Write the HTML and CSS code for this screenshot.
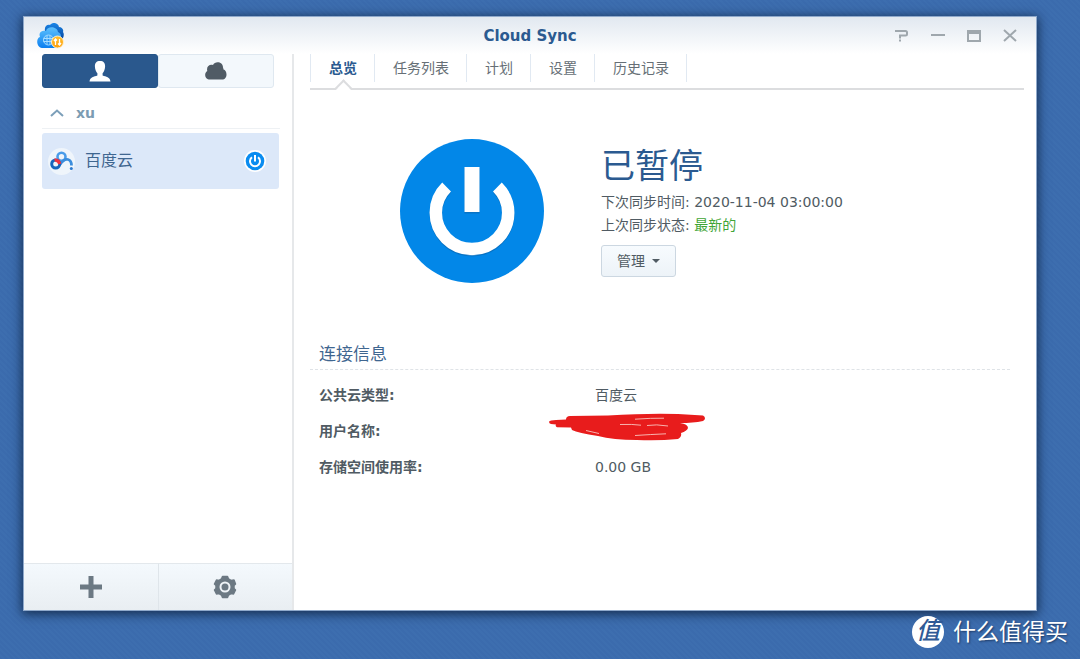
FILE: index.html
```html
<!DOCTYPE html>
<html lang="zh-CN">
<head>
<meta charset="utf-8">
<title>Cloud Sync</title>
<link rel="stylesheet" href="styles.css">
</head>
<body class="desktop">
<div class="window">
  <header class="titlebar">
    <svg class="app-icon" width="28" height="26" viewBox="0 0 28 26" aria-hidden="true">
      <defs>
        <linearGradient id="back" x1="0" y1="0" x2="0" y2="1"><stop offset="0" stop-color="#1b86e8"/><stop offset="1" stop-color="#053f96"/></linearGradient>
        <linearGradient id="front" x1="0" y1="0" x2="0" y2="1"><stop offset="0" stop-color="#5cc0fd"/><stop offset="1" stop-color="#0b7ff0"/></linearGradient>
        <linearGradient id="coin" x1="0" y1="0" x2="0" y2="1"><stop offset="0" stop-color="#ffc02e"/><stop offset="1" stop-color="#ff9f0a"/></linearGradient>
      </defs>
      <path fill="url(#back)" d="M8 8C7 4 10 1 13 2C15-1 21-1 22 4C25 4 27 7 26 9C28 12 26 17 23 18H12Z"/>
      <path fill="url(#front)" d="M5 25C-1 24-1 15 3 14C1 9 6 7 9 8C10 3 20 3 21 9C24 10 25 14 23 16C24 20 23 25 20 25Z"/>
      <g fill="none" stroke="#a5dcff" stroke-width="1"><circle cx="11.500" cy="17" r="5"/><path d="M6.500 15.500H16M6.500 18.500H16M10 12.500V21.500M13 12.500V21.500"/></g>
      <circle cx="20.500" cy="19" r="6" fill="url(#coin)" stroke="#fff0cf" stroke-width="1"/>
      <path d="M18.500 22V16.500M17 18L18.500 16L20 17.500M22.500 16V21.500M21 20.500L22.500 22L24 20" fill="none" stroke="#fff" stroke-width="1.300"/>
    </svg>
    <h1 class="title">Cloud Sync</h1>
    <div class="controls">
      <button class="control" aria-label="帮助"><svg width="14" height="14" viewBox="0 0 14 14"><path d="M0 2H10.500Q12 2 12 3.500V5Q12 6.500 10.500 6.500H5V9.500M5 10.500V12.500"/></svg></button>
      <button class="control" aria-label="最小化"><svg width="14" height="14" viewBox="0 0 14 14"><path d="M0 6H14"/></svg></button>
      <button class="control" aria-label="最大化"><svg width="14" height="14" viewBox="0 0 14 14"><path d="M1 1V12H13V1"/><path class="thick" d="M0 3H14"/></svg></button>
      <button class="control" aria-label="关闭"><svg width="14" height="14" viewBox="0 0 14 14"><path d="M1 1L13 12M13 1L1 12"/></svg></button>
    </div>
  </header>
  <div class="content">
    <aside class="sidebar">
      <div class="switch">
        <button class="switch-btn switch-on" aria-label="用户"><svg width="22" height="21" viewBox="0 0 22 21"><path fill="#fff" d="M11 0C14.500 0 16.300 2 16.100 5.500C16 9 14.600 11 13.600 12.300V14.500C17 15.700 21 16 21.500 20.500H.500C1 16 5 15.700 8.400 14.500V12.300C7.400 11 6 9 5.900 5.500C5.700 2 7.500 0 11 0Z"/></svg></button>
        <button class="switch-btn" aria-label="云"><svg width="22" height="18" viewBox="0 0 22 18"><path fill="#505b65" d="M5 17.500C0 17.500-1.500 11.500 2.300 9C1 4 5 1.800 8 3C10-1.500 18-.500 18 5.500C18.500 6.500 18.400 7 18.300 7.300C23 9 22.500 17.500 17 17.500Z"/></svg></button>
      </div>
      <button class="group" aria-expanded="true"><svg width="14" height="8" viewBox="0 0 14 8"><path d="M1 7L7 1.500L13 7" fill="none" stroke="#7c9fb9" stroke-width="2"/></svg>xu</button>
      <button class="account">
        <svg width="27" height="27" viewBox="0 0 27 27" aria-hidden="true">
          <circle cx="13.500" cy="13.500" r="13.500" fill="#eff5fb"/>
          <circle cx="13.500" cy="8.800" r="4" fill="none" stroke="#4a9ce9" stroke-width="2.600"/>
          <path d="M12 16.500Q16 10.500 20 11.500Q23.500 12.500 23.500 17.500" fill="none" stroke="#3b8ddd" stroke-width="2.800"/>
          <circle cx="7.700" cy="16" r="4" fill="none" stroke="#1766bd" stroke-width="3"/>
          <path d="M6.500 12.200Q10.500 11.500 11.800 16" fill="none" stroke="#ef3340" stroke-width="3.200"/>
          <circle cx="23.300" cy="20.500" r="1.500" fill="#2b79ce"/>
        </svg>
        <span class="account-name">百度云</span>
        <svg width="22" height="22" viewBox="0 0 22 22" aria-hidden="true"><circle cx="11" cy="11" r="11" fill="#fff"/><circle cx="11" cy="11" r="9.300" fill="#0a8cf0"/><path d="M8 7.200A5 5 0 1 0 14 7.200M11 5V11.500" fill="none" stroke="#fff" stroke-width="2"/></svg>
      </button>
      <div class="side-actions">
        <button class="side-btn" aria-label="添加"><svg width="24" height="24" viewBox="0 0 24 24"><path d="M12 1V23M1 12H23" stroke="#6c7983" stroke-width="5"/></svg></button>
        <button class="side-btn" aria-label="设置"><svg width="24" height="24" viewBox="0 0 24 24"><path fill="#6c7983" stroke="#6c7983" stroke-width="1.500" stroke-linejoin="round" d="M9.500 1.500H14.500L15.500 4L18 5.500L21 5L22.500 9L21 10.500V13.500L22.500 15L20.500 19L18 18.500L15.500 20L14.500 22.500H9.500L8.500 20L6 18.500L3.500 19L1.500 15L3 13.500V10.500L1.500 9L3.500 5L6 5.500L8.500 4Z"/><circle cx="12" cy="12" r="4.500" fill="#6c7983" stroke="#eef3f7" stroke-width="2"/></svg></button>
      </div>
    </aside>
    <main class="main">
      <nav class="tabs">
        <button class="tab tab-on">总览</button>
        <button class="tab">任务列表</button>
        <button class="tab">计划</button>
        <button class="tab">设置</button>
        <button class="tab">历史记录</button>
      </nav>
      <section class="status">
        <svg class="power" width="144" height="144" viewBox="0 0 144 144" aria-hidden="true">
          <circle cx="72" cy="72" r="72" fill="#0287e8"/>
          <g fill="none" stroke="#0873c5"><path d="M46.600 49.200A36.200 36.200 0 1 0 97.400 49.200" stroke-width="12.500"/><path d="M72 29V74.500" stroke-width="15"/></g>
          <g fill="none" stroke="#fff"><path d="M46.600 48A36.200 36.200 0 1 0 97.400 48" stroke-width="12.500"/><path d="M72 28V73" stroke-width="15"/></g>
        </svg>
        <div class="status-text">
          <h2 class="state">已暂停</h2>
          <p class="line">下次同步时间: 2020-11-04 03:00:00</p>
          <p class="line">上次同步状态: <span class="ok">最新的</span></p>
          <button class="manage">管理<span class="caret"></span></button>
        </div>
      </section>
      <section class="info">
        <h3 class="info-title">连接信息</h3>
        <table class="info-table">
          <tr><th scope="row">公共云类型:</th><td>百度云</td></tr>
          <tr><th scope="row">用户名称:</th><td><svg class="scribble" width="158" height="28" viewBox="0 0 158 28" aria-hidden="true"><path fill="#e81c1c" d="M1 8.700Q2 7 8 7L18 6.500Q18 3 22 3L60 2.500Q100 0 130 1L155 2.500Q159 5 155 8Q145 10 132 10Q140 11 140 15Q139 18 133 20Q134 24 130 26Q110 28 89 27Q65 27 50 23Q30 20 24 17L23 14.500L9 14.300Q7 13 8 11.500L3 11Q1 10.500 1 8.700Z"/><g fill="none" stroke="#f8b3ae" stroke-width="1"><path d="M87 6.200Q103 5 116 5.200M72 11.500Q84 11 93 12.200M99 12.500Q108 11 120 13M87 22.500Q102 21.500 118 20.800M38 17.500L51 20.500"/></g></svg></td></tr>
          <tr><th scope="row">存储空间使用率:</th><td>0.00 GB</td></tr>
        </table>
      </section>
    </main>
  </div>
</div>
<footer class="watermark"><span class="mark">值</span><span>什么值得买</span></footer>
</body>
</html>
```
FILE: styles.css
```css
* { box-sizing: border-box; }

.desktop {
  margin: 0;
  min-height: 100vh;
  padding-top: 16px;
  display: flex;
  flex-direction: column;
  background: repeating-linear-gradient(45deg, #3b6bad 0 2px, #3d6eaf 2px 4px);
  color: #505b63;
  font: 14px/20px "DejaVu Sans", "Noto Sans CJK SC", sans-serif;
}

button {
  margin: 0;
  padding: 0;
  border: 0;
  background: none;
  color: inherit;
  font: inherit;
  cursor: pointer;
}

h1, h2, h3, p { margin: 0; }
svg { display: block; flex: none; }

.window {
  flex: 1;
  display: flex;
  flex-direction: column;
  margin: 0 43px 0 23px;
  background: #fff;
  border: 1px solid #8fa9cb;
  box-shadow: 0 2px 10px 1px rgba(8, 25, 50, 0.75);
}

.titlebar {
  display: grid;
  grid-template-columns: 1fr auto 1fr;
  align-items: center;
  height: 37px;
  padding: 0 19px;
  background: linear-gradient(#e1e8f0, #fff);
}
.app-icon { margin-left: -6px; }
.title {
  color: #2b5a90;
  font-size: 15px;
  line-height: 20px;
}
.controls {
  display: flex;
  justify-content: flex-end;
  gap: 22px;
}
.control path {
  fill: none;
  stroke: #9fa7ad;
  stroke-width: 2;
}
.control .thick { stroke-width: 4; }

.content {
  flex: 1;
  display: flex;
}

.sidebar {
  width: 270px;
  display: flex;
  flex-direction: column;
  border-right: 2px solid #e6e8ea;
}
.switch {
  display: flex;
  margin: 0 18px;
}
.switch-btn {
  flex: 1;
  display: flex;
  align-items: center;
  justify-content: center;
  height: 34px;
  border: 1px solid #dfe8f0;
  border-radius: 3px;
  background: #f3f8fc;
}
.switch-on {
  border-color: #27568a;
  background: #2a588d;
}
.group {
  display: flex;
  align-items: center;
  gap: 12px;
  height: 41px;
  margin: 0 12px 4px 18px;
  padding: 10px 8px 0;
  border-bottom: 1px solid #eef1f4;
  color: #7c9cb2;
  font-weight: bold;
}
.account {
  display: flex;
  align-items: center;
  gap: 10px;
  height: 56px;
  margin: 0 13px 0 18px;
  padding: 0 13px 0 6px;
  border-radius: 3px;
  background: #dce8f9;
  color: #3f6690;
  font-size: 16px;
}
.account-name {
  flex: 1;
  text-align: left;
}
.side-actions {
  display: flex;
  margin-top: auto;
}
.side-btn {
  flex: 1;
  display: flex;
  align-items: center;
  justify-content: center;
  height: 47px;
  border-top: 1px solid #e3e8ec;
  background: linear-gradient(#f4f9fd, #e9eef2);
}
.side-btn + .side-btn { border-left: 1px solid #dfe5ea; }

.main {
  flex: 1;
  padding: 0 12px 0 16px;
}
.tabs {
  display: flex;
  align-items: flex-start;
  height: 36px;
  border-bottom: 2px solid #dcdddf;
}
.tab {
  position: relative;
  height: 28px;
  padding: 0 17px 0 18px;
  border-right: 1px solid #e1e9f2;
  color: #666f76;
}
.tab-on {
  border-left: 1px solid #e1e9f2;
  color: #2b5a90;
  font-weight: bold;
}
.tab-on::after {
  content: "";
  position: absolute;
  left: 50%;
  bottom: -13px;
  width: 11px;
  height: 11px;
  margin-left: -6px;
  border: solid #dcdddf;
  border-width: 2px 0 0 2px;
  background: linear-gradient(135deg, #fff 55%, transparent 55%);
  transform: rotate(45deg);
}

.status {
  display: flex;
  gap: 57px;
  margin: 49px 0 0 90px;
}
.state {
  margin-bottom: 7px;
  color: #2b5a90;
  font: 400 34px/40px "Noto Sans CJK SC", sans-serif;
}
.status-text { padding-top: 5px; }
.line { line-height: 23px; }
.ok { color: #3fa535; }
.manage {
  display: flex;
  align-items: center;
  gap: 7px;
  height: 32px;
  margin-top: 8px;
  padding: 0 15px;
  border: 1px solid #ccd7e1;
  border-radius: 3px;
  background: linear-gradient(#f7fbfe, #edf3f8);
}
.caret {
  border: 4px solid transparent;
  border-top-color: #505b63;
  border-bottom: 0;
}

.info { margin: 56px 14px 0 0; }
.info-title {
  height: 31px;
  padding-left: 9px;
  border-bottom: 1px dashed #dfe3e7;
  color: #3f6690;
  font-size: 17px;
  font-weight: normal;
  line-height: 30px;
}
.info-table {
  width: 100%;
  margin-top: 7px;
  border-collapse: collapse;
}
.info-table th, .info-table td {
  height: 36px;
  padding: 0;
  text-align: left;
}
.info-table th {
  width: 285px;
  padding-left: 9px;
}
.scribble { margin: -8px 0 0 -47px; }

.watermark {
  display: flex;
  align-items: center;
  justify-content: flex-end;
  gap: 9px;
  height: 48px;
  padding: 0 12px 6px 0;
  color: #fff;
  font-size: 23px;
  text-shadow: 1px 1px 2px #1d3a66;
}
.mark {
  width: 32px;
  height: 32px;
  border-radius: 50%;
  background: #fff;
  color: #2f5a96;
  font-size: 24px;
  font-style: italic;
  font-weight: 500;
  line-height: 31px;
  text-align: center;
  text-shadow: none;
}
```
